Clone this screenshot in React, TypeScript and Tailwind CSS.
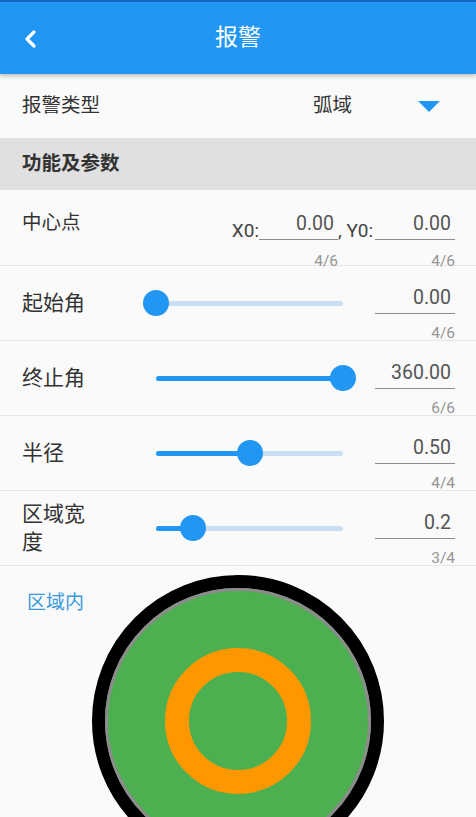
import React from "react";

interface SliderRowProps {
  label: string;
  value: string;
  counter: string;
  percent: number;
}

function Slider({ percent }: { percent: number }) {
  return (
    <div className="relative h-[26px] w-[187px]">
      <div className="absolute left-0 right-0 top-[11px] h-[5px] rounded-full bg-[#c8def2]" />
      <div
        className="absolute left-0 top-[11px] h-[5px] rounded-full bg-[#2196f3]"
        style={{ width: `${percent * 100}%` }}
      />
      <div
        className="absolute top-0 h-[26px] w-[26px] -translate-x-1/2 rounded-full bg-[#2196f3]"
        style={{ left: `${percent * 100}%` }}
      />
    </div>
  );
}

function SliderRow({ label, value, counter, percent }: SliderRowProps) {
  return (
    <div className="flex h-[75px] items-center border-b border-[#e6e6e6] pl-[22px] pr-[21px]">
      <div className="w-[70px] text-[21px] leading-[28px] text-[#333]">{label}</div>
      <div className="ml-[64px]">
        <Slider percent={percent} />
      </div>
      <div className="ml-auto flex w-[80px] flex-col self-stretch pt-[20px]">
        <div className="border-b border-[#8c8c8c] pb-[4px] pr-[4px] text-right text-[19.5px] leading-[23px] text-[#555]">
          {value}
        </div>
        <div className="mt-[10px] text-right text-[15.5px] leading-[18px] text-[#959595]">
          {counter}
        </div>
      </div>
    </div>
  );
}

function CoordInput({ value, width }: { value: string; width: string }) {
  return (
    <div className={`flex flex-col ${width}`}>
      <div className="border-b border-[#8c8c8c] pb-[4px] pr-[4px] text-right text-[19.5px] leading-[23px] text-[#555]">
        {value}
      </div>
      <div className="mt-[12px] text-right text-[15.5px] leading-[18px] text-[#959595]">4/6</div>
    </div>
  );
}

export default function App() {
  return (
    <div
      className="h-[817px] w-[476px] overflow-hidden bg-[#fafafa]"
      style={{ fontFamily: "Roboto, 'Noto Sans CJK SC', sans-serif" }}
    >
      {/* ── HEADER ─────────────────────────────── */}
      <div className="relative z-10 flex h-[74px] items-center border-t-2 border-[#1565c0] bg-[#2196f3] shadow-[0_2px_4px_rgba(0,0,0,0.25)]">
        <div className="absolute left-[22px] top-[27px]">
          <svg width="16" height="20" viewBox="0 0 16 20" fill="none">
            <polyline
              points="12,3 5,10 12,17"
              stroke="#fff"
              strokeWidth="3.2"
              strokeLinecap="round"
              strokeLinejoin="round"
            />
          </svg>
        </div>
        <div className="w-full text-center text-[23px] leading-[30px] text-white">报警</div>
      </div>

      {/* ── ALARM TYPE ─────────────────────────── */}
      <div className="flex h-[64px] items-center pl-[22px] pr-[36px]">
        <div className="text-[19.5px] leading-[26px] text-[#333]">报警类型</div>
        <div className="ml-auto text-[19.5px] leading-[26px] text-[#333]">弧域</div>
        <svg className="ml-[66px]" width="22" height="11" viewBox="0 0 22 11">
          <polygon points="0,0 22,0 11,11" fill="#2196f3" />
        </svg>
      </div>

      {/* ── SECTION ────────────────────────────── */}
      <div className="flex h-[52px] items-center bg-[#e0e0e0] pl-[22px] text-[19.5px] font-bold leading-[26px] text-[#333]">
        功能及参数
      </div>

      {/* ── CENTER POINT ───────────────────────── */}
      <div className="flex h-[76px] border-b border-[#e6e6e6] pl-[22px] pr-[21px]">
        <div className="pt-[20px] text-[19.5px] leading-[26px] text-[#333]">中心点</div>
        <div className="ml-auto flex items-start pt-[22px]">
          <div className="mt-[8px] text-[19px] leading-[22px] text-[#444]">X0:</div>
          <CoordInput value="0.00" width="w-[79px]" />
          <div className="mt-[8px] w-[37px] text-[19px] leading-[22px] text-[#444]">, Y0:</div>
          <CoordInput value="0.00" width="w-[80px]" />
        </div>
      </div>

      <SliderRow label="起始角" value="0.00" counter="4/6" percent={0} />
      <SliderRow label="终止角" value="360.00" counter="6/6" percent={1} />
      <SliderRow label="半径" value="0.50" counter="4/4" percent={0.5} />
      <SliderRow label="区域宽度" value="0.2" counter="3/4" percent={0.2} />

      {/* ── PREVIEW ────────────────────────────── */}
      <div className="relative">
        <div className="absolute left-[27px] top-[20px] text-[19px] leading-[24px] text-[#3a98dc]">区域内</div>
        <svg className="mx-auto mt-[5px] block" width="300" height="300" viewBox="0 0 300 300">
          <circle cx="150" cy="150" r="139.5" fill="#4caf50" stroke="#000" strokeWidth="13" />
          <circle cx="150" cy="150" r="131.5" fill="none" stroke="#8c8c8c" strokeWidth="3" />
          <circle cx="150" cy="150" r="61" fill="none" stroke="#ff9800" strokeWidth="24" />
        </svg>
      </div>
    </div>
  );
}
